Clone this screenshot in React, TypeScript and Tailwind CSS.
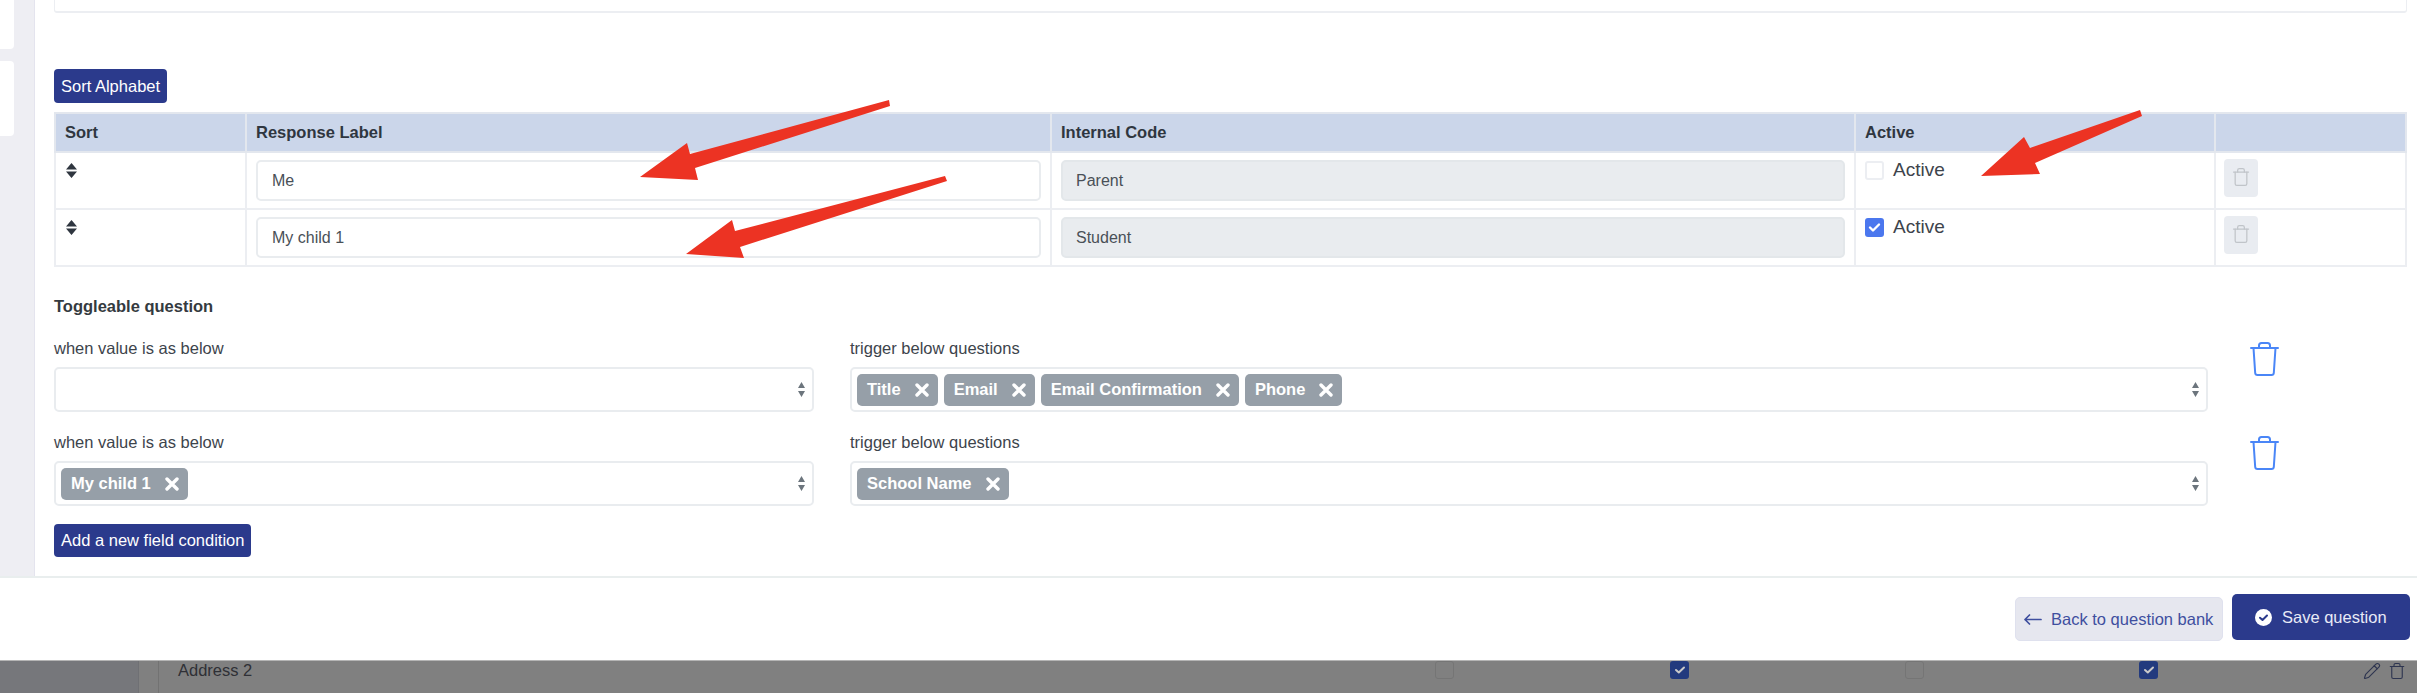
import React from 'react';
import { Pencil, Trash } from 'lucide-react';

const rows = [
  { label: 'Me', code: 'Parent', active: false },
  { label: 'My child 1', code: 'Student', active: true },
];

const conditions = [
  { when: [] as string[], trigger: ['Title', 'Email', 'Email Confirmation', 'Phone'] },
  { when: ['My child 1'], trigger: ['School Name'] },
];

const SortIcon = () => (
  <svg width="11" height="15" viewBox="0 0 11 15" className="block">
    <path d="M5.5 0 11 6.5H0ZM0 8.5h11L5.5 15Z" fill="#2f3640" />
  </svg>
);

const BinIcon = () => (
  <svg width="29" height="34" viewBox="0 0 29 34" fill="none" stroke="#4a86f7" strokeWidth="2" strokeLinecap="round" strokeLinejoin="round" className="block">
    <path d="M1 6h27" />
    <path d="M9 6V3.5C9 2 10 1 11.5 1h6C19 1 20 2 20 3.5V6" />
    <path d="M3.5 6l1.7 25c.1 1.4 1 2 2.3 2h14c1.3 0 2.2-.6 2.3-2L25.5 6" />
  </svg>
);

const Chip = ({ text }: { text: string }) => (
  <span className="flex h-[32px] items-center gap-[14px] rounded-[5px] bg-[#969fa8] pl-[10px] pr-[9px] text-[16.5px] font-bold text-white">
    {text}
    <svg width="14" height="14" viewBox="0 0 14 14" stroke="#fff" strokeWidth="3.4" strokeLinecap="round">
      <path d="M2 2l10 10M12 2 2 12" />
    </svg>
  </span>
);

const MultiSelect = ({ values }: { values: string[] }) => (
  <div className="flex h-[45px] w-full items-center justify-between rounded-[5px] border-2 border-[#e9ecef] bg-white pl-[5px] pr-[7px]">
    <div className="flex gap-[6px]">
      {values.map((v) => (
        <Chip key={v} text={v} />
      ))}
    </div>
    <svg width="7" height="15" viewBox="0 0 7 15" className="block">
      <path d="M3.5 0 7 6H0ZM0 9h7l-3.5 6Z" fill="#6c757d" />
    </svg>
  </div>
);

const DimCheck = () => (
  <svg width="12" height="10" viewBox="0 0 12 10" fill="none" stroke="#c9c9c9" strokeWidth="2" strokeLinecap="round" strokeLinejoin="round">
    <path d="M2 5 4.8 7.5 10 2.5" />
  </svg>
);

export default function App() {
  return (
    <div className="flex h-[693px] w-full flex-col overflow-hidden bg-white font-['Liberation_Sans',sans-serif] text-[#212529]">
      <div className="flex h-[576px] shrink-0">
        {/* left rail, mostly cut off */}
        <div className="w-[35px] shrink-0 border-r border-[#e4e4ee] bg-[#eeeef3] pr-[20px]">
          <div className="h-[49px] rounded-br-[4px] bg-white" />
          <div className="mt-[12px] h-[75px] rounded-r-[4px] bg-white" />
        </div>

        <div className="flex-1 pl-[19px] pr-[10px]">
          <div className="h-[13px] rounded-b-[3px] border-x border-b-2 border-[#eceef2]" />

          <button className="mt-[56px] block h-[34px] rounded-[4px] bg-[#2b3a8c] px-[7px] text-[16.5px] text-white">Sort Alphabet</button>

          <table className="mt-[9px] w-full table-fixed border-collapse">
            <thead>
              <tr className="h-[39px] bg-[#cbd6ea] text-left text-[16.5px] font-bold text-[#2f3640]">
                <th className="w-[191px] border-2 border-[#e3e7ee] px-[9px]">Sort</th>
                <th className="w-[805px] border-2 border-[#e3e7ee] px-[9px]">Response Label</th>
                <th className="w-[804px] border-2 border-[#e3e7ee] px-[9px]">Internal Code</th>
                <th className="w-[360px] border-2 border-[#e3e7ee] px-[9px]">Active</th>
                <th className="border-2 border-[#e3e7ee] px-[9px]" />
              </tr>
            </thead>
            <tbody>
              {rows.map((row) => (
                <tr key={row.label} className="h-[57px]">
                  <td className="border-2 border-[#eceef2] px-[10px] pb-[30px] pt-[10px] align-top">
                    <SortIcon />
                  </td>
                  <td className="border-2 border-[#eceef2] px-[9px] py-[7px]">
                    <div className="flex h-[41px] items-center rounded-[5px] border-2 border-[#e9ecef] bg-white pl-[14px] text-[16px] text-[#495057]">{row.label}</div>
                  </td>
                  <td className="border-2 border-[#eceef2] px-[9px] py-[7px]">
                    <div className="flex h-[41px] items-center rounded-[5px] border-2 border-[#e3e7ea] bg-[#e9ecef] pl-[13px] text-[16px] text-[#495057]">{row.code}</div>
                  </td>
                  <td className="border-2 border-[#eceef2] px-[9px] pb-[20px] pt-[5px] align-top">
                    <div className="flex items-center gap-[9px] text-[19px] leading-[24px] text-[#3d444c]">
                      {row.active ? (
                        <span className="flex h-[19px] w-[19px] items-center justify-center rounded-[3px] bg-[#4b77ee]">
                          <svg width="13" height="11" viewBox="0 0 13 11" fill="none" stroke="#fff" strokeWidth="2.4" strokeLinecap="round" strokeLinejoin="round">
                            <path d="M2 5.5 5 8.5 11 2.5" />
                          </svg>
                        </span>
                      ) : (
                        <span className="h-[19px] w-[19px] rounded-[3px] border-2 border-[#eceef2] bg-white" />
                      )}
                      Active
                    </div>
                  </td>
                  <td className="border-2 border-[#eceef2] px-[8px] pb-[10px] pt-[6px] align-top">
                    <div className="flex h-[38px] w-[34px] items-center justify-center rounded-[4px] bg-[#e9ecf1] pb-[2px]">
                      <Trash size={20} strokeWidth={1.5} color="#c0c4c9" />
                    </div>
                  </td>
                </tr>
              ))}
            </tbody>
          </table>

          <h4 className="mt-[29px] text-[16.5px] font-bold leading-[20px] text-[#343a40]">Toggleable question</h4>

          <div className="mt-[22px] flex flex-col gap-[20px]">
            {conditions.map((c, i) => (
              <div key={i} className="flex">
                <div className="w-[760px] shrink-0">
                  <div className="mb-[9px] text-[16.5px] leading-[20px] text-[#3d444c]">when value is as below</div>
                  <MultiSelect values={c.when} />
                </div>
                <div className="ml-[36px] w-[1358px] shrink-0">
                  <div className="mb-[9px] text-[16.5px] leading-[20px] text-[#3d444c]">trigger below questions</div>
                  <MultiSelect values={c.trigger} />
                </div>
                <div className="ml-[42px] mt-[4px]">
                  <BinIcon />
                </div>
              </div>
            ))}
          </div>

          <button className="mt-[18px] block h-[33px] rounded-[4px] bg-[#2b3a8c] px-[7px] text-[16.5px] text-white">Add a new field condition</button>
        </div>
      </div>

      {/* sticky footer */}
      <div className="flex h-[84px] shrink-0 items-start justify-end gap-[9px] border-t-2 border-[#e9eeee] bg-white pr-[7px]">
        <button className="mt-[19px] flex h-[44px] w-[208px] items-center gap-[9px] rounded-[5px] border border-[#dfe1ee] bg-[#e6e7ef] pl-[8px] text-[16.5px] text-[#3f4f9f]">
          <svg width="18" height="11" viewBox="0 0 18 11" fill="none" stroke="#3f4f9f" strokeWidth="1.7" strokeLinecap="round" strokeLinejoin="round">
            <path d="M1 5.5h16M5.5 1 1 5.5 5.500 10" />
          </svg>
          Back to question bank
        </button>
        <button className="mt-[16px] flex h-[46px] w-[178px] items-center gap-[10px] rounded-[5px] bg-[#2b3a8c] pl-[23px] text-[16.5px] text-[#e8eaf6]">
          <svg width="17" height="17" viewBox="0 0 17 17">
            <circle cx="8.5" cy="8.5" r="8.5" fill="#fff" />
            <path d="M5 8.7 7.5 11 12 6.5" fill="none" stroke="#2b3a8c" strokeWidth="2" strokeLinecap="round" strokeLinejoin="round" />
          </svg>
          Save question
        </button>
      </div>

      {/* page behind the modal, dimmed */}
      <div className="flex flex-1 border-t border-[#b5b5b5] bg-[#808080]">
        <div className="w-[139px] shrink-0 border-r border-[#6f7074] bg-[#76777b]" />
        <div className="w-[20px] shrink-0 border-r border-[#727272]" />
        <div className="flex flex-1 items-start">
          <span className="ml-[19px] w-[1257px] shrink-0 text-[16.5px] leading-[19px] text-[#2f3036]">Address 2</span>
          <span className="h-[18px] w-[19px] shrink-0 rounded-[3px] border border-[#757575]" />
          <span className="ml-[216px] flex h-[18px] w-[19px] shrink-0 items-center justify-center rounded-[3px] bg-[#223a7e]">
            <DimCheck />
          </span>
          <span className="ml-[216px] h-[18px] w-[19px] shrink-0 rounded-[3px] border border-[#757575]" />
          <span className="ml-[215px] flex h-[18px] w-[19px] shrink-0 items-center justify-center rounded-[3px] bg-[#223a7e]">
            <DimCheck />
          </span>
          <span className="ml-[205px] mt-[1px] flex items-center gap-[7px] text-[#2e3550]">
            <Pencil size={18} strokeWidth={1.5} />
            <Trash size={18} strokeWidth={1.5} />
          </span>
        </div>
      </div>

      {/* red annotation arrows drawn over the screenshot */}
      <svg className="pointer-events-none absolute left-0 top-0" width="2417" height="693" viewBox="0 0 2417 693">
        <polygon fill="#ec3323" points="889,100 890,106 695,168 698,180 640,177 687,143 690,154" />
        <polygon fill="#ec3323" points="945,176 947,181 740,247 744,258 686,254 732,220 735,231" />
        <polygon fill="#ec3323" points="2140,110 2142,116 2035,163 2040,174 1981,176 2024,137 2030,148" />
      </svg>
    </div>
  );
}
